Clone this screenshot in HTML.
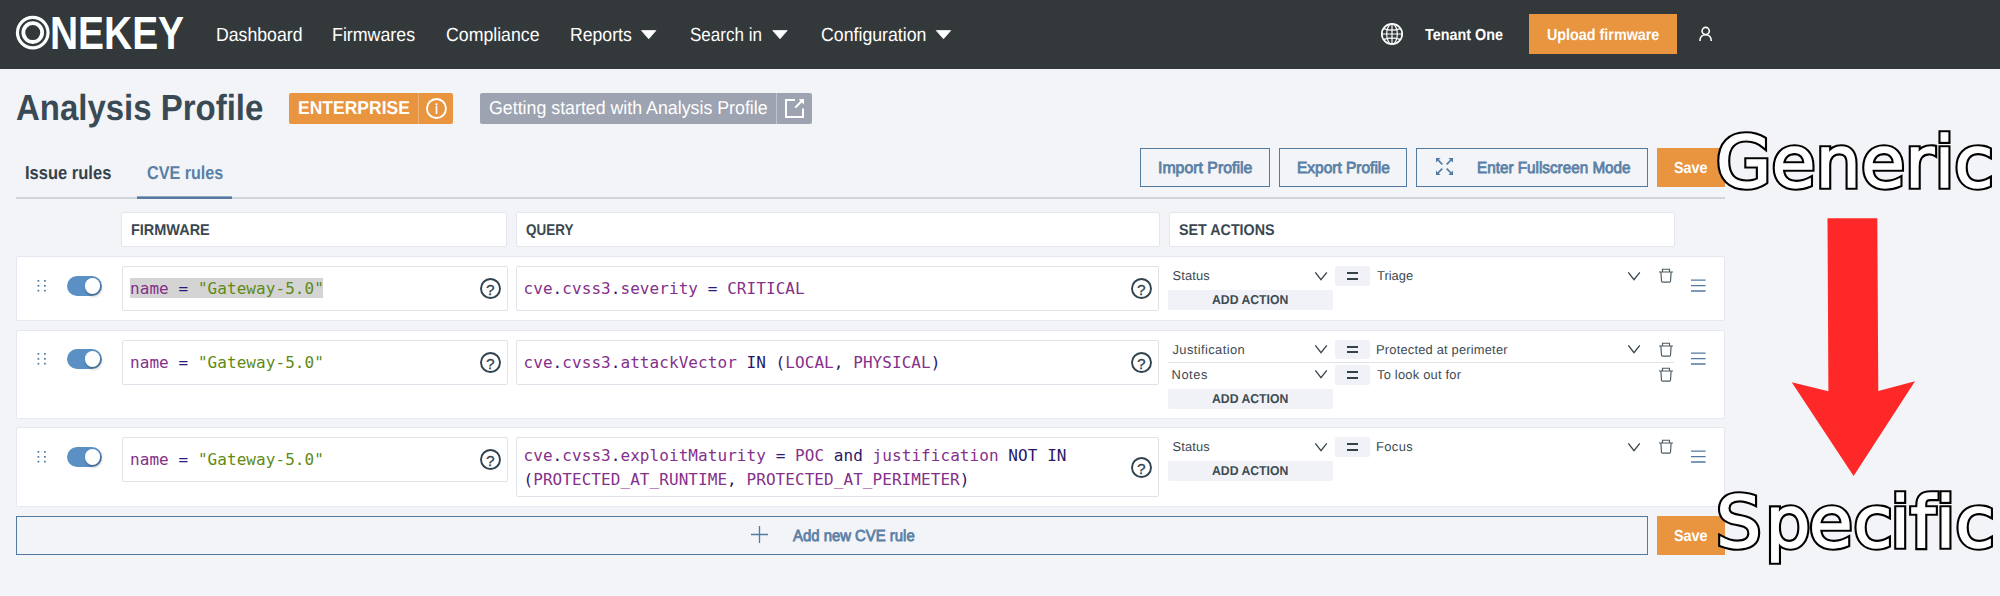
<!DOCTYPE html>
<html lang="en"><head><meta charset="utf-8"><title>Analysis Profile - CVE rules</title>
<style>
html,body{margin:0;padding:0}
body{width:2000px;height:596px;position:relative;overflow:hidden;background:#f2f4f8;font-family:"Liberation Sans",sans-serif;-webkit-font-smoothing:antialiased}
.b{position:absolute;box-sizing:border-box}
.t{position:absolute;white-space:pre;line-height:1em;margin:0;padding:0;transform-origin:0 0;text-rendering:geometricPrecision}
a.t{text-decoration:none}
.c{position:absolute;white-space:pre;line-height:1em;font-family:"DejaVu Sans Mono","Liberation Mono",monospace;font-size:16px;letter-spacing:0.062px;color:#2a1768}
.c i{font-style:normal;color:#85308a}
.c b{font-weight:normal;color:#2a1a80}
.c u{text-decoration:none;color:#5f8a14}
svg{position:absolute;overflow:visible}
</style></head><body>
<nav class="b" style="left:0;top:0;width:2000px;height:69px;background:#33383b"></nav>
<div class="b" style="left:1529px;top:14px;width:148px;height:40px;background:#e9943f"></div>
<div class="b" style="left:289px;top:93px;width:164px;height:31px;background:#e9943f;border-radius:2px"></div>
<div class="b" style="left:418px;top:93px;width:1px;height:31px;background:rgba(255,255,255,.28)"></div>
<div class="b" style="left:480px;top:93px;width:332px;height:31px;background:#9da3b0;border-radius:2px"></div>
<div class="b" style="left:776px;top:93px;width:1px;height:31px;background:rgba(255,255,255,.35)"></div>
<div class="b" style="left:16px;top:197px;width:1709px;height:2px;background:#d0d5dc"></div>
<div class="b" style="left:137px;top:196px;width:95px;height:1px;background:#8ea8c2"></div>
<div class="b" style="left:137px;top:197px;width:95px;height:2px;background:#567b9f"></div>
<div class="b" style="left:1140px;top:148px;width:130px;height:39px;border:1px solid #527aa1"></div>
<div class="b" style="left:1279px;top:148px;width:128px;height:39px;border:1px solid #527aa1"></div>
<div class="b" style="left:1416px;top:148px;width:232px;height:39px;border:1px solid #527aa1"></div>
<div class="b" style="left:1657px;top:148px;width:68px;height:39px;background:#e9943f"></div>
<div class="b" style="left:121px;top:212px;width:386px;height:35px;background:#fff;border:1px solid #e4e7ef;border-radius:2px"></div>
<div class="b" style="left:516px;top:212px;width:644px;height:35px;background:#fff;border:1px solid #e4e7ef;border-radius:2px"></div>
<div class="b" style="left:1169px;top:212px;width:506px;height:35px;background:#fff;border:1px solid #e4e7ef;border-radius:2px"></div>
<div class="b" style="left:16px;top:256px;width:1709px;height:65px;background:#fff;border:1px solid #e5e8f0;border-radius:2px"></div>
<div class="b" style="left:16px;top:330px;width:1709px;height:89px;background:#fff;border:1px solid #e5e8f0;border-radius:2px"></div>
<div class="b" style="left:16px;top:427px;width:1709px;height:80px;background:#fff;border:1px solid #e5e8f0;border-radius:2px"></div>
<div class="b" style="left:122px;top:266px;width:386px;height:45px;background:#fff;border:1px solid #dfe2e8;border-radius:2px"></div>
<div class="b" style="left:516px;top:266px;width:643px;height:45px;background:#fff;border:1px solid #dfe2e8;border-radius:2px"></div>
<div class="b" style="left:122px;top:340px;width:386px;height:45px;background:#fff;border:1px solid #dfe2e8;border-radius:2px"></div>
<div class="b" style="left:516px;top:340px;width:643px;height:45px;background:#fff;border:1px solid #dfe2e8;border-radius:2px"></div>
<div class="b" style="left:122px;top:437px;width:386px;height:45px;background:#fff;border:1px solid #dfe2e8;border-radius:2px"></div>
<div class="b" style="left:516px;top:437px;width:643px;height:60px;background:#fff;border:1px solid #dfe2e8;border-radius:2px"></div>
<div class="b" style="left:130px;top:278px;width:193px;height:20px;background:#d4d4d4"></div>
<div class="b" style="left:67px;top:276px;width:35px;height:20px;background:#5b90c4;border-radius:10px"></div>
<div class="b" style="left:84.9px;top:278.3px;width:15.399999999999991px;height:15.399999999999977px;background:#fff;border-radius:8px;box-shadow:1px 2px 3px rgba(0,0,0,.3)"></div>
<div class="b" style="left:67px;top:349px;width:35px;height:20px;background:#5b90c4;border-radius:10px"></div>
<div class="b" style="left:84.9px;top:351.3px;width:15.399999999999991px;height:15.399999999999977px;background:#fff;border-radius:8px;box-shadow:1px 2px 3px rgba(0,0,0,.3)"></div>
<div class="b" style="left:67px;top:447px;width:35px;height:20px;background:#5b90c4;border-radius:10px"></div>
<div class="b" style="left:84.9px;top:449.3px;width:15.399999999999991px;height:15.399999999999977px;background:#fff;border-radius:8px;box-shadow:1px 2px 3px rgba(0,0,0,.3)"></div>
<div class="b" style="left:1335px;top:266px;width:35px;height:20px;background:#f0f2f7;border-radius:2px"></div>
<div class="b" style="left:1347px;top:272.4px;width:11px;height:1.75px;background:#35424a"></div>
<div class="b" style="left:1347px;top:277.9px;width:11px;height:1.75px;background:#35424a"></div>
<div class="b" style="left:1335px;top:340px;width:35px;height:19px;background:#f0f2f7;border-radius:2px"></div>
<div class="b" style="left:1347px;top:345.9px;width:11px;height:1.75px;background:#35424a"></div>
<div class="b" style="left:1347px;top:351.4px;width:11px;height:1.75px;background:#35424a"></div>
<div class="b" style="left:1335px;top:365px;width:35px;height:20px;background:#f0f2f7;border-radius:2px"></div>
<div class="b" style="left:1347px;top:371.4px;width:11px;height:1.75px;background:#35424a"></div>
<div class="b" style="left:1347px;top:376.9px;width:11px;height:1.75px;background:#35424a"></div>
<div class="b" style="left:1335px;top:437px;width:35px;height:20px;background:#f0f2f7;border-radius:2px"></div>
<div class="b" style="left:1347px;top:443.4px;width:11px;height:1.75px;background:#35424a"></div>
<div class="b" style="left:1347px;top:448.9px;width:11px;height:1.75px;background:#35424a"></div>
<div class="b" style="left:1168px;top:290px;width:165px;height:20px;background:#f0f2f7;border-radius:2px"></div>
<div class="b" style="left:1168px;top:389px;width:165px;height:20px;background:#f0f2f7;border-radius:2px"></div>
<div class="b" style="left:1168px;top:461px;width:165px;height:20px;background:#f0f2f7;border-radius:2px"></div>
<div class="b" style="left:1168px;top:362px;width:506px;height:1px;background:#dfe3ea"></div>
<div class="b" style="left:16px;top:516px;width:1632px;height:39px;border:1px solid #527aa1"></div>
<div class="b" style="left:1657px;top:516px;width:68px;height:39px;background:#e9943f"></div>
<a class="t" style="left:216.17px;top:26.20px;font-size:19.00px;font-weight:400;color:#fff;letter-spacing:0.000px;transform:scaleX(0.9302);">Dashboard</a>
<a class="t" style="left:332.36px;top:26.20px;font-size:19.00px;font-weight:400;color:#fff;letter-spacing:0.000px;transform:scaleX(0.9373);">Firmwares</a>
<a class="t" style="left:446.40px;top:26.20px;font-size:19.00px;font-weight:400;color:#fff;letter-spacing:0.000px;transform:scaleX(0.9323);">Compliance</a>
<a class="t" style="left:569.57px;top:26.20px;font-size:19.00px;font-weight:400;color:#fff;letter-spacing:0.000px;transform:scaleX(0.9288);">Reports</a>
<a class="t" style="left:690.20px;top:26.20px;font-size:19.00px;font-weight:400;color:#fff;letter-spacing:0.000px;transform:scaleX(0.8971);">Search in</a>
<a class="t" style="left:820.90px;top:26.20px;font-size:19.00px;font-weight:400;color:#fff;letter-spacing:0.000px;transform:scaleX(0.9329);">Configuration</a>
<span class="t" style="left:1425.00px;top:28.20px;font-size:16.00px;font-weight:700;color:#fff;letter-spacing:0.000px;transform:scaleX(0.8974);">Tenant One</span>
<span class="t" style="left:1546.60px;top:28.20px;font-size:16.00px;font-weight:700;color:#fff;letter-spacing:0.000px;transform:scaleX(0.8959);">Upload firmware</span>
<h1 class="t" style="left:16.25px;top:90.20px;font-size:36.30px;font-weight:700;color:#3a4a55;letter-spacing:0.000px;transform:scaleX(0.9082);">Analysis Profile</h1>
<span class="t" style="left:297.81px;top:99.20px;font-size:18.70px;font-weight:700;color:#fff;letter-spacing:0.000px;transform:scaleX(0.9368);">ENTERPRISE</span>
<span class="t" style="left:489.25px;top:99.20px;font-size:18.70px;font-weight:400;color:#fff;letter-spacing:0.000px;transform:scaleX(0.9512);">Getting started with Analysis Profile</span>
<span class="t" style="left:24.72px;top:164.20px;font-size:18.70px;font-weight:700;color:#35414a;letter-spacing:0.000px;transform:scaleX(0.8841);">Issue rules</span>
<span class="t" style="left:146.50px;top:164.20px;font-size:18.70px;font-weight:700;color:#5a80a6;letter-spacing:0.000px;transform:scaleX(0.8647);">CVE rules</span>
<span class="t" style="left:1158.21px;top:161.20px;font-size:16.00px;font-weight:400;color:#5a80a6;-webkit-text-stroke:0.80px #5a80a6;letter-spacing:0.000px;transform:scaleX(0.9911);">Import Profile</span>
<span class="t" style="left:1296.82px;top:161.20px;font-size:16.00px;font-weight:400;color:#5a80a6;-webkit-text-stroke:0.80px #5a80a6;letter-spacing:0.000px;transform:scaleX(0.9673);">Export Profile</span>
<span class="t" style="left:1477.23px;top:161.20px;font-size:16.00px;font-weight:400;color:#5a80a6;-webkit-text-stroke:0.80px #5a80a6;letter-spacing:0.000px;transform:scaleX(0.9542);">Enter Fullscreen Mode</span>
<span class="t" style="left:1674.30px;top:161.20px;font-size:16.00px;font-weight:700;color:#fff;letter-spacing:0.000px;transform:scaleX(0.8994);">Save</span>
<span class="t" style="left:130.57px;top:223.20px;font-size:15.50px;font-weight:700;color:#3a4750;letter-spacing:0.000px;transform:scaleX(0.9333);">FIRMWARE</span>
<span class="t" style="left:526.25px;top:223.20px;font-size:15.50px;font-weight:700;color:#3a4750;letter-spacing:0.000px;transform:scaleX(0.8686);">QUERY</span>
<span class="t" style="left:1179.00px;top:223.20px;font-size:15.50px;font-weight:700;color:#3a4750;letter-spacing:0.000px;transform:scaleX(0.9222);">SET ACTIONS</span>
<span class="t" style="left:1172.50px;top:270.20px;font-size:12.90px;font-weight:400;color:#3d4a52;letter-spacing:0.130px;">Status</span>
<span class="t" style="left:1377.00px;top:270.20px;font-size:12.90px;font-weight:400;color:#3d4a52;letter-spacing:0.022px;">Triage</span>
<span class="t" style="left:1212.25px;top:294.20px;font-size:12.90px;font-weight:700;color:#3d4a52;letter-spacing:0.000px;transform:scaleX(0.9484);">ADD ACTION</span>
<span class="t" style="left:1172.50px;top:344.20px;font-size:12.90px;font-weight:400;color:#3d4a52;letter-spacing:0.402px;">Justification</span>
<span class="t" style="left:1376.00px;top:344.20px;font-size:12.90px;font-weight:400;color:#3d4a52;letter-spacing:0.191px;">Protected at perimeter</span>
<span class="t" style="left:1171.50px;top:369.20px;font-size:12.90px;font-weight:400;color:#3d4a52;letter-spacing:0.568px;">Notes</span>
<span class="t" style="left:1377.00px;top:369.20px;font-size:12.90px;font-weight:400;color:#3d4a52;letter-spacing:0.220px;">To look out for</span>
<span class="t" style="left:1212.25px;top:393.20px;font-size:12.90px;font-weight:700;color:#3d4a52;letter-spacing:0.000px;transform:scaleX(0.9484);">ADD ACTION</span>
<span class="t" style="left:1172.50px;top:441.20px;font-size:12.90px;font-weight:400;color:#3d4a52;letter-spacing:0.130px;">Status</span>
<span class="t" style="left:1376.00px;top:441.20px;font-size:12.90px;font-weight:400;color:#3d4a52;letter-spacing:0.398px;">Focus</span>
<span class="t" style="left:1212.25px;top:465.20px;font-size:12.90px;font-weight:700;color:#3d4a52;letter-spacing:0.000px;transform:scaleX(0.9484);">ADD ACTION</span>
<span class="t" style="left:793.37px;top:529.20px;font-size:16.00px;font-weight:400;color:#5a80a6;-webkit-text-stroke:0.80px #5a80a6;letter-spacing:0.000px;transform:scaleX(0.9306);">Add new CVE rule</span>
<span class="t" style="left:1674.30px;top:529.20px;font-size:16.00px;font-weight:700;color:#fff;letter-spacing:0.000px;transform:scaleX(0.8994);">Save</span>
<div class="c" style="left:130px;top:281.47px"><i>name</i> <b>=</b> <u>"Gateway-5.0"</u></div>
<div class="c" style="left:130px;top:355.47px"><i>name</i> <b>=</b> <u>"Gateway-5.0"</u></div>
<div class="c" style="left:130px;top:452.47px"><i>name</i> <b>=</b> <u>"Gateway-5.0"</u></div>
<div class="c" style="left:523.5px;top:281.47px"><i>cve</i>.<i>cvss3</i>.<i>severity</i> <b>=</b> <i>CRITICAL</i></div>
<div class="c" style="left:523.5px;top:355.47px"><i>cve</i>.<i>cvss3</i>.<i>attackVector</i> IN (<i>LOCAL</i>, <i>PHYSICAL</i>)</div>
<div class="c" style="left:523.5px;top:448.47px"><i>cve</i>.<i>cvss3</i>.<i>exploitMaturity</i> <b>=</b> <i>POC</i> and <i>justification</i> NOT IN</div>
<div class="c" style="left:523.5px;top:472.47px">(<i>PROTECTED_AT_RUNTIME</i>, <i>PROTECTED_AT_PERIMETER</i>)</div>
<svg style="left:0;top:0" width="220" height="69" viewBox="0 0 220 69"><circle cx="32.75" cy="32.6" r="15.3" fill="none" stroke="#fbffff" stroke-width="3.2"/><circle cx="32.75" cy="32.6" r="9.4" fill="none" stroke="#fbffff" stroke-width="3.8"/>
<text x="0" y="0" transform="translate(49.9 48.6) scale(0.847 1)" font-family="Liberation Sans, sans-serif" font-weight="700" font-size="46" fill="#fbffff">NEKEY</text></svg>
<svg style="left:0;top:0" width="1" height="1"><path d="M641.5 30.6 h14.4 l-7.2 8.2 z" fill="#fff" stroke="#fff" stroke-width="0.8" stroke-linejoin="round"/></svg>
<svg style="left:0;top:0" width="1" height="1"><path d="M772.8 30.6 h14.4 l-7.2 8.2 z" fill="#fff" stroke="#fff" stroke-width="0.8" stroke-linejoin="round"/></svg>
<svg style="left:0;top:0" width="1" height="1"><path d="M936.3 30.6 h14.4 l-7.2 8.2 z" fill="#fff" stroke="#fff" stroke-width="0.8" stroke-linejoin="round"/></svg>
<svg style="left:1381px;top:23px" width="22" height="22" viewBox="0 0 22 22" fill="none" stroke="#fff" stroke-width="1.2"><circle cx="11" cy="11" r="10.2" stroke-width="1.7"/><ellipse cx="11" cy="11" rx="5.3" ry="10.2"/><path d="M11 1v20M1 11h20M2.8 5.6Q11 8.7 19.2 5.6M2.8 16.4Q11 13.3 19.2 16.4"/></svg>
<svg style="left:1698px;top:26px" width="16" height="16" viewBox="0 0 16 16" fill="none" stroke="#fff" stroke-width="1.6"><circle cx="7.7" cy="5" r="3.6"/><path d="M1.9 15c0-4 2.5-6.3 5.7-6.3s5.7 2.3 5.7 6.3"/></svg>
<svg style="left:425px;top:97px" width="23" height="23" viewBox="0 0 23 23"><circle cx="11.45" cy="11.5" r="9.5" fill="none" stroke="#fff" stroke-width="1.9"/><path d="M11.5 8.8v8.2" stroke="#fff" stroke-width="1.6"/><circle cx="11.5" cy="7.3" r="1.1" fill="#fff"/></svg>
<svg style="left:785px;top:99px" width="20" height="20" viewBox="0 0 20 20" fill="none" stroke="#fff" stroke-width="2"><path d="M10 1H1V18H18V9.5"/><path d="M10.2 8.6L16.5 2.3"/><path d="M19.1 0L13.6 0.2L18.9 5.5Z" fill="#fff" stroke="none"/></svg>
<svg style="left:1436px;top:158px" width="17" height="17" viewBox="0 0 17 17" fill="#527aa1" stroke="#527aa1" stroke-width="1.7"><path d="M2 2L6.3 6.3M10.7 6.3L15 2M2 15L6.3 10.7M10.7 10.7L15 15" fill="none"/><path stroke="none" d="M0 0h4.6L0 4.6zM17 0v4.6L12.4 0zM0 17v-4.6L4.6 17zM17 17h-4.6L17 12.4z"/></svg>
<svg style="left:751px;top:526px" width="17" height="17" viewBox="0 0 17 17" stroke="#527aa1" stroke-width="1.3"><path d="M8.5 0v17M0 8.5h17"/></svg>
<svg style="left:479.0px;top:276.8px" width="23" height="23" viewBox="0 0 23 23"><circle cx="11.5" cy="11.5" r="9.5" fill="none" stroke="#2f424d" stroke-width="1.9"/><text x="11.4" y="17.6" text-anchor="middle" font-family="Liberation Sans, sans-serif" font-size="15.4" fill="#2f424d" stroke="#2f424d" stroke-width="0.3">?</text></svg>
<svg style="left:1130.0px;top:276.8px" width="23" height="23" viewBox="0 0 23 23"><circle cx="11.5" cy="11.5" r="9.5" fill="none" stroke="#2f424d" stroke-width="1.9"/><text x="11.4" y="17.6" text-anchor="middle" font-family="Liberation Sans, sans-serif" font-size="15.4" fill="#2f424d" stroke="#2f424d" stroke-width="0.3">?</text></svg>
<svg style="left:479.0px;top:351.1px" width="23" height="23" viewBox="0 0 23 23"><circle cx="11.5" cy="11.5" r="9.5" fill="none" stroke="#2f424d" stroke-width="1.9"/><text x="11.4" y="17.6" text-anchor="middle" font-family="Liberation Sans, sans-serif" font-size="15.4" fill="#2f424d" stroke="#2f424d" stroke-width="0.3">?</text></svg>
<svg style="left:1130.0px;top:351.1px" width="23" height="23" viewBox="0 0 23 23"><circle cx="11.5" cy="11.5" r="9.5" fill="none" stroke="#2f424d" stroke-width="1.9"/><text x="11.4" y="17.6" text-anchor="middle" font-family="Liberation Sans, sans-serif" font-size="15.4" fill="#2f424d" stroke="#2f424d" stroke-width="0.3">?</text></svg>
<svg style="left:479.0px;top:448.1px" width="23" height="23" viewBox="0 0 23 23"><circle cx="11.5" cy="11.5" r="9.5" fill="none" stroke="#2f424d" stroke-width="1.9"/><text x="11.4" y="17.6" text-anchor="middle" font-family="Liberation Sans, sans-serif" font-size="15.4" fill="#2f424d" stroke="#2f424d" stroke-width="0.3">?</text></svg>
<svg style="left:1130.0px;top:455.9px" width="23" height="23" viewBox="0 0 23 23"><circle cx="11.5" cy="11.5" r="9.5" fill="none" stroke="#2f424d" stroke-width="1.9"/><text x="11.4" y="17.6" text-anchor="middle" font-family="Liberation Sans, sans-serif" font-size="15.4" fill="#2f424d" stroke="#2f424d" stroke-width="0.3">?</text></svg>
<svg style="left:1315.3px;top:271.8px" width="12" height="9" viewBox="0 0 12 9" fill="none" stroke="#35424a" stroke-width="1.3"><path d="M0.3 0.4L6 7.7L11.8 0.4"/></svg>
<svg style="left:1628.2px;top:271.8px" width="12" height="9" viewBox="0 0 12 9" fill="none" stroke="#35424a" stroke-width="1.3"><path d="M0.3 0.4L6 7.7L11.8 0.4"/></svg>
<svg style="left:1659px;top:268.3px" width="15" height="15" viewBox="0 0 15 15" fill="none" stroke="#4c5a63" stroke-width="1.15"><path d="M0 4h14M3.5 3.8V1.2h7v2.6M1.9 4.2l0.6 9c0.05 0.6 0.45 0.9 1 0.9h7c0.55 0 0.95-0.3 1-0.9l0.6-9"/></svg>
<svg style="left:1691.4px;top:279.4px" width="15" height="13" viewBox="0 0 15 13" stroke="#527aa1" stroke-width="1.3"><path d="M0 1.2h14.6M0 6.7h14.6M0 12h14.6"/></svg>
<svg style="left:1315.3px;top:344.8px" width="12" height="9" viewBox="0 0 12 9" fill="none" stroke="#35424a" stroke-width="1.3"><path d="M0.3 0.4L6 7.7L11.8 0.4"/></svg>
<svg style="left:1628.2px;top:344.8px" width="12" height="9" viewBox="0 0 12 9" fill="none" stroke="#35424a" stroke-width="1.3"><path d="M0.3 0.4L6 7.7L11.8 0.4"/></svg>
<svg style="left:1659px;top:342.3px" width="15" height="15" viewBox="0 0 15 15" fill="none" stroke="#4c5a63" stroke-width="1.15"><path d="M0 4h14M3.5 3.8V1.2h7v2.6M1.9 4.2l0.6 9c0.05 0.6 0.45 0.9 1 0.9h7c0.55 0 0.95-0.3 1-0.9l0.6-9"/></svg>
<svg style="left:1691.4px;top:352.2px" width="15" height="13" viewBox="0 0 15 13" stroke="#527aa1" stroke-width="1.3"><path d="M0 1.2h14.6M0 6.7h14.6M0 12h14.6"/></svg>
<svg style="left:1315.3px;top:442.8px" width="12" height="9" viewBox="0 0 12 9" fill="none" stroke="#35424a" stroke-width="1.3"><path d="M0.3 0.4L6 7.7L11.8 0.4"/></svg>
<svg style="left:1628.2px;top:442.8px" width="12" height="9" viewBox="0 0 12 9" fill="none" stroke="#35424a" stroke-width="1.3"><path d="M0.3 0.4L6 7.7L11.8 0.4"/></svg>
<svg style="left:1659px;top:439.3px" width="15" height="15" viewBox="0 0 15 15" fill="none" stroke="#4c5a63" stroke-width="1.15"><path d="M0 4h14M3.5 3.8V1.2h7v2.6M1.9 4.2l0.6 9c0.05 0.6 0.45 0.9 1 0.9h7c0.55 0 0.95-0.3 1-0.9l0.6-9"/></svg>
<svg style="left:1691.4px;top:450.4px" width="15" height="13" viewBox="0 0 15 13" stroke="#527aa1" stroke-width="1.3"><path d="M0 1.2h14.6M0 6.7h14.6M0 12h14.6"/></svg>
<svg style="left:1315.3px;top:370.3px" width="12" height="9" viewBox="0 0 12 9" fill="none" stroke="#35424a" stroke-width="1.3"><path d="M0.3 0.4L6 7.7L11.8 0.4"/></svg>
<svg style="left:1659px;top:367.4px" width="15" height="15" viewBox="0 0 15 15" fill="none" stroke="#4c5a63" stroke-width="1.15"><path d="M0 4h14M3.5 3.8V1.2h7v2.6M1.9 4.2l0.6 9c0.05 0.6 0.45 0.9 1 0.9h7c0.55 0 0.95-0.3 1-0.9l0.6-9"/></svg>
<svg style="left:37px;top:279.95px" width="10" height="13" viewBox="0 0 10 13" fill="#4f789e"><rect x="0.55" y="0" width="1.7" height="1.7"/><rect x="0.55" y="5.0" width="1.7" height="1.7"/><rect x="0.55" y="9.8" width="1.7" height="1.7"/><rect x="7.05" y="0" width="1.7" height="1.7"/><rect x="7.05" y="5.0" width="1.7" height="1.7"/><rect x="7.05" y="9.8" width="1.7" height="1.7"/></svg>
<svg style="left:37px;top:353.05px" width="10" height="13" viewBox="0 0 10 13" fill="#4f789e"><rect x="0.55" y="0" width="1.7" height="1.7"/><rect x="0.55" y="5.0" width="1.7" height="1.7"/><rect x="0.55" y="9.8" width="1.7" height="1.7"/><rect x="7.05" y="0" width="1.7" height="1.7"/><rect x="7.05" y="5.0" width="1.7" height="1.7"/><rect x="7.05" y="9.8" width="1.7" height="1.7"/></svg>
<svg style="left:37px;top:450.95px" width="10" height="13" viewBox="0 0 10 13" fill="#4f789e"><rect x="0.55" y="0" width="1.7" height="1.7"/><rect x="0.55" y="5.0" width="1.7" height="1.7"/><rect x="0.55" y="9.8" width="1.7" height="1.7"/><rect x="7.05" y="0" width="1.7" height="1.7"/><rect x="7.05" y="5.0" width="1.7" height="1.7"/><rect x="7.05" y="9.8" width="1.7" height="1.7"/></svg>
<svg style="left:0;top:0" width="2000" height="596" viewBox="0 0 2000 596">
<path d="M1827.5 218.2L1877.3 218.2L1878.3 391L1915 381.2L1853.6 476L1791.7 382.2L1828.4 391.2Z" fill="#ff2828"/>
<g font-family="DejaVu Sans, sans-serif" font-size="71" stroke-linejoin="miter" stroke-miterlimit="3" style="font-variant-ligatures:none">
<text transform="translate(1716.0 187.4) scale(1.0087 1)" fill="#000" stroke="#000" stroke-width="5.60">Generic</text><text transform="translate(1716.0 187.4) scale(1.0087 1)" fill="#fff" stroke="#fff" stroke-width="1.30">Generic</text>
<text transform="translate(1716.0 547.4) scale(1.0087 1)" dx="0 3.7 -1.8 0.35 -2.25 0 0 0" fill="#000" stroke="#000" stroke-width="5.60">Specific</text><text transform="translate(1716.0 547.4) scale(1.0087 1)" dx="0 3.7 -1.8 0.35 -2.25 0 0 0" fill="#fff" stroke="#fff" stroke-width="1.30">Specific</text>
</g></svg>
</body></html>
